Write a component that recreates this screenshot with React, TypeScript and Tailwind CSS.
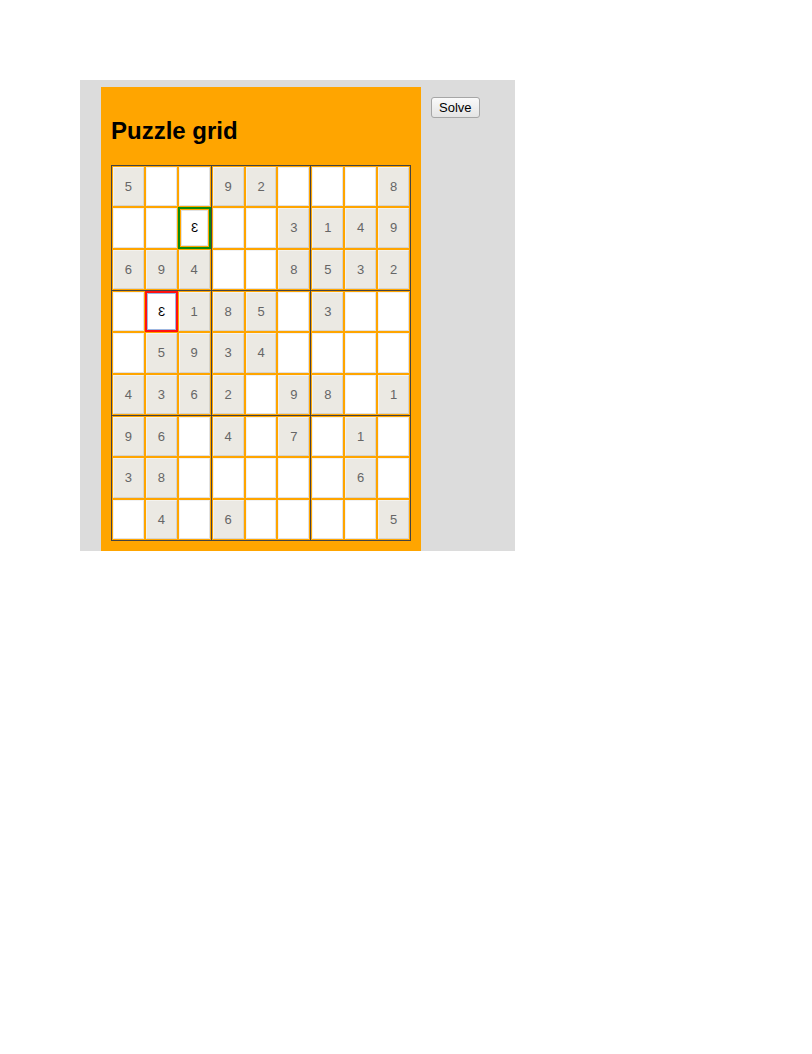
import React from 'react';

const PUZZLE: number[][] = [
  [5, 0, 0, 9, 2, 0, 0, 0, 8],
  [0, 0, -3, 0, 0, 3, 1, 4, 9],
  [6, 9, 4, 0, 0, 8, 5, 3, 2],
  [0, -3, 1, 8, 5, 0, 3, 0, 0],
  [0, 5, 9, 3, 4, 0, 0, 0, 0],
  [4, 3, 6, 2, 0, 9, 8, 0, 1],
  [9, 6, 0, 4, 0, 7, 0, 1, 0],
  [3, 8, 0, 0, 0, 0, 0, 6, 0],
  [0, 4, 0, 6, 0, 0, 0, 0, 5],
];

const Cell: React.FC<{ row: number; col: number }> = ({ row, col }) => {
  const value = PUZZLE[row][col];
  const isGreen = row === 1 && col === 2;
  const isRed = row === 3 && col === 1;

  if (isGreen) {
    return (
      <div className="border-2 border-[#0a8a0a] bg-[#ffa500] p-px flex">
        <div className="flex-1 flex items-center justify-center bg-white border border-[#e2e2e2] text-[13px] text-black">
          <span className="inline-block -scale-x-100">3</span>
        </div>
      </div>
    );
  }

  if (isRed) {
    return (
      <div className="border-2 border-[#ff1010] flex">
        <div className="flex-1 flex items-center justify-center bg-white border border-[#9db6e0] text-[13px] text-black">
          <span className="inline-block -scale-x-100">3</span>
        </div>
      </div>
    );
  }

  const given = value > 0;
  return (
    <div className="bg-[#ffa500] p-px flex">
      <div
        className={
          given
            ? 'flex-1 flex items-center justify-center bg-[#ebe9e3] border border-t-[#f3f2ee] border-l-[#f3f2ee] border-r-[#d5d3cc] border-b-[#d5d3cc] text-[13px] text-[#666]'
            : 'flex-1 flex items-center justify-center bg-white border border-t-[#f2f2f2] border-l-[#f2f2f2] border-r-[#e2e2e2] border-b-[#e2e2e2] text-[13px] text-[#666]'
        }
      >
        {given ? value : ''}
      </div>
    </div>
  );
};

const Box: React.FC<{ boxRow: number; boxCol: number }> = ({ boxRow, boxCol }) => (
  <div className="grid grid-cols-3 grid-rows-3 bg-[#ffa500]">
    {[0, 1, 2].map(r =>
      [0, 1, 2].map(c => (
        <Cell key={`${r}-${c}`} row={boxRow * 3 + r} col={boxCol * 3 + c} />
      ))
    )}
  </div>
);

export default function App() {
  return (
    <div className="pt-20 pl-20 font-['Liberation_Sans',Arial,sans-serif]">
      <div className="w-[435px] bg-[#dcdcdc] pt-[7px] pl-[21px] flex items-start">
        <div className="w-[320px] bg-[#ffa500] px-[10px] pt-[10px] pb-[10px]">
          <h2 className="my-5 text-[24px] font-bold leading-[28px] text-black">Puzzle grid</h2>
          <div className="w-[300px] h-[376px] bg-[#444] p-px grid grid-cols-3 grid-rows-3 gap-px">
            {[0, 1, 2].map(br =>
              [0, 1, 2].map(bc => <Box key={`${br}-${bc}`} boxRow={br} boxCol={bc} />)
            )}
          </div>
        </div>
        <button className="ml-[10px] mt-[10px] h-[21px] px-[7px] text-[13px] leading-none text-black rounded-[3px] border border-[#a6a6a6] bg-gradient-to-b from-[#fafafa] to-[#e4e4e4]">
          Solve
        </button>
      </div>
    </div>
  );
}
